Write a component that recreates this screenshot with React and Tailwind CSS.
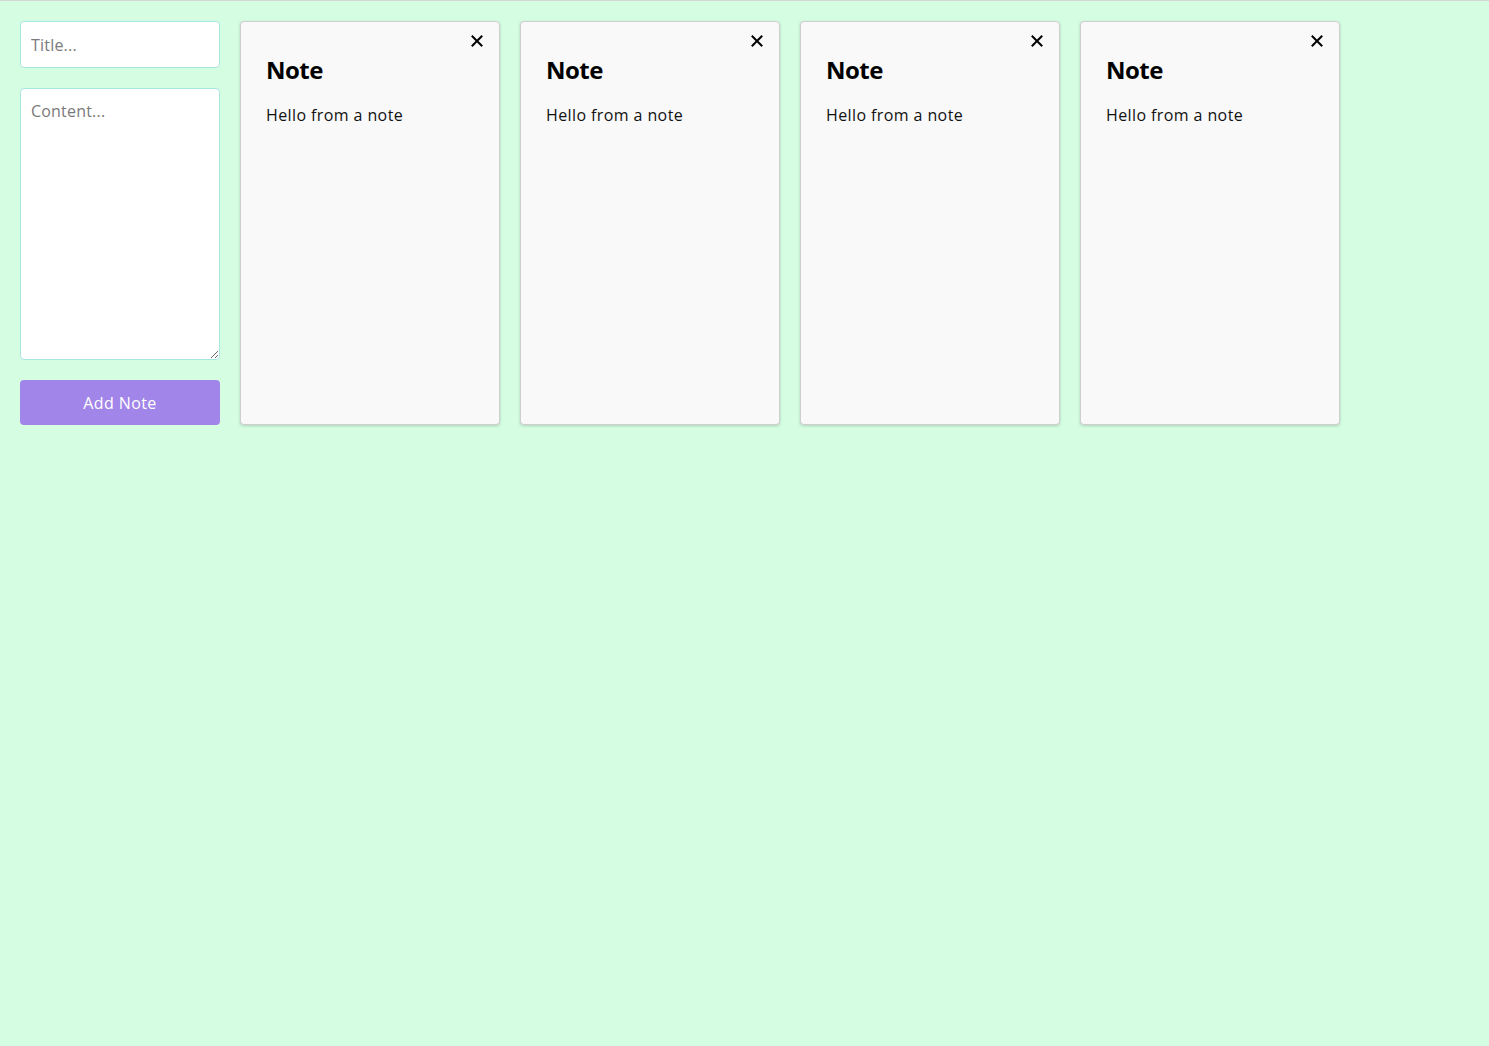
import React, { useState } from 'react';

const initialNotes = [1, 2, 3, 4].map((id) => ({ id, title: 'Note', content: 'Hello from a note' }));

const NoteCard = ({ note, onDelete }) => (
  <div className="relative w-[260px] h-[404px] shrink-0 rounded-[4px] border border-[#cfcfcf] bg-[#f9f9f9] px-[25px] pt-[33px] shadow-[0_1px_3px_rgba(0,0,0,0.18)]">
    <button
      onClick={() => onDelete(note.id)}
      className="absolute right-[14px] top-[11px] flex h-[16px] w-[16px] items-center justify-center text-black"
    >
      <svg width="12" height="12" viewBox="0 0 12 12" fill="none" stroke="currentColor" strokeWidth="2" strokeLinecap="square">
        <path d="M1.5 1.5 L10.5 10.5 M10.5 1.5 L1.5 10.5" />
      </svg>
    </button>
    <h2 className="text-[24px] font-bold leading-[30px] tracking-[-0.5px] text-black">{note.title}</h2>
    <p className="mt-[19px] text-[16px] leading-[22px] tracking-[0.4px] text-[#111]">{note.content}</p>
  </div>
);

export default function App() {
  const [notes, setNotes] = useState(initialNotes);
  const [title, setTitle] = useState('');
  const [content, setContent] = useState('');

  const addNote = (e) => {
    e.preventDefault();
    if (!title && !content) return;
    setNotes([...notes, { id: Date.now(), title, content }]);
    setTitle('');
    setContent('');
  };

  const deleteNote = (id) => setNotes(notes.filter((n) => n.id !== id));

  return (
    <div
      className="min-h-[1046px] border-t border-[#d6d6d6] bg-[#d4fde2] p-[20px] font-['Open_Sans',sans-serif]"
    >
      <div className="flex items-start gap-[20px]">
        <form onSubmit={addNote} className="flex w-[200px] shrink-0 flex-col gap-[20px]">
          <input
            value={title}
            onChange={(e) => setTitle(e.target.value)}
            placeholder="Title..."
            className="h-[47px] rounded-[4px] border border-[#a8e6e0] bg-white px-[10px] text-[16px] tracking-[0.2px] text-black outline-none placeholder:text-[#7a7a7a]"
          />
          <textarea
            value={content}
            onChange={(e) => setContent(e.target.value)}
            placeholder="Content..."
            className="h-[272px] resize-y rounded-[4px] border border-[#a8e6e0] bg-white px-[10px] py-[10px] text-[16px] tracking-[0.2px] text-black outline-none placeholder:text-[#7a7a7a]"
          />
          <button
            type="submit"
            className="h-[45px] rounded-[4px] bg-[#a285e8] text-[16px] tracking-[0.4px] text-white"
          >
            Add Note
          </button>
        </form>
        {notes.map((note) => (
          <NoteCard key={note.id} note={note} onDelete={deleteNote} />
        ))}
      </div>
    </div>
  );
}
